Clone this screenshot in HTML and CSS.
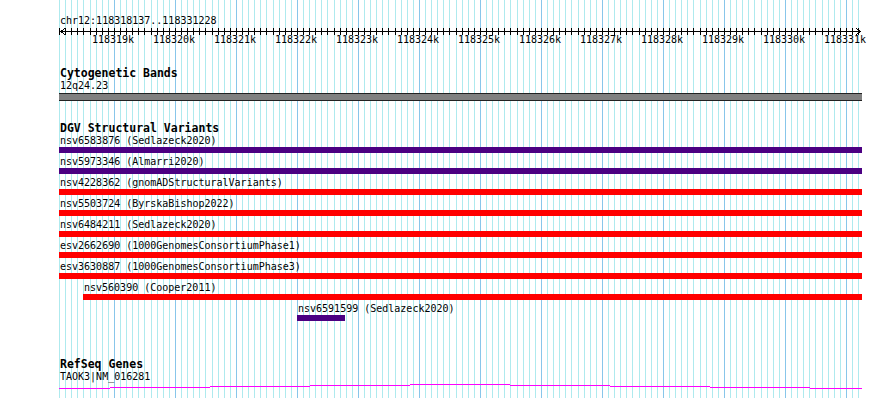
FILE: index.html
```html
<!DOCTYPE html>
<html lang="en">
<head>
<meta charset="UTF-8">
<title>chr12:118318137..118331228</title>
<link rel="stylesheet" href="styles.css">
</head>
<body>
<div class="browser">
  <div id="grid" class="grid"></div>
  <div class="tracks">
    <div class="locus">chr12:118318137..118331228</div>
    <div id="ruler" class="ruler"></div>

    <div class="track cyto">
      <div class="track-title">Cytogenetic Bands</div>
      <div class="label">12q24.23</div>
      <div class="band"></div>
    </div>

    <div class="track dgv">
      <div class="track-title">DGV Structural Variants</div>
      <div class="feature">
        <div class="label">nsv6583876 (Sedlazeck2020)</div>
        <div class="bar gain"></div>
      </div>
      <div class="feature">
        <div class="label">nsv5973346 (Almarri2020)</div>
        <div class="bar gain"></div>
      </div>
      <div class="feature">
        <div class="label">nsv4228362 (gnomADStructuralVariants)</div>
        <div class="bar loss"></div>
      </div>
      <div class="feature">
        <div class="label">nsv5503724 (ByrskaBishop2022)</div>
        <div class="bar loss"></div>
      </div>
      <div class="feature">
        <div class="label">nsv6484211 (Sedlazeck2020)</div>
        <div class="bar loss"></div>
      </div>
      <div class="feature">
        <div class="label">esv2662690 (1000GenomesConsortiumPhase1)</div>
        <div class="bar loss"></div>
      </div>
      <div class="feature">
        <div class="label">esv3630887 (1000GenomesConsortiumPhase3)</div>
        <div class="bar loss"></div>
      </div>
      <div class="feature" style="margin-left: 24px;">
        <div class="label">nsv560390 (Cooper2011)</div>
        <div class="bar loss"></div>
      </div>
      <div class="feature" style="margin-left: 238px;">
        <div class="label">nsv6591599 (Sedlazeck2020)</div>
        <div class="bar gain" style="width: 48px;"></div>
      </div>
    </div>

    <div class="track refseq">
      <div class="track-title">RefSeq Genes</div>
      <div class="label">TAOK3|NM_016281</div>
      <svg class="gene" width="803" height="7" viewBox="0 0 803 7">
        <path d="M0 5.5H51 M51 4.5H151 M151 3.5H251 M251 2.5H351 M351 1.5H451 M451 2.5H551 M551 3.5H651 M651 4.5H751 M751 5.5H803" />
      </svg>
    </div>
  </div>
</div>

<script>
  const start = 118318100;   // first 100bp gridline
  const pxPerStep = 6.1;     // 100bp
  const left = 59;
  const width = 803;
  const grid = document.getElementById('grid');
  const ruler = document.getElementById('ruler');

  let ticks = '';
  let labels = '';
  for (let k = 0; ; k++) {
    const x = Math.round(k * pxPerStep);
    if (x >= width) break;
    const major = k % 10 === 9;

    const line = document.createElement('div');
    line.className = major ? 'gridline major' : 'gridline';
    line.style.left = (left + x) + 'px';
    grid.appendChild(line);

    ticks += `M${x + 0.5} 1V8 `;
    if (major) {
      const kb = (start + k * 100) / 1000;
      labels += `<span class="tick-label" style="left: ${x - 22}px;">${kb}k</span>`;
    }
  }

  ruler.innerHTML =
    `<svg class="scale" width="${width}" height="9" viewBox="0 0 ${width} 9">` +
    `<path d="M1 4.5H${width - 1} ${ticks}" />` +
    `<path d="M6 1.5L1.5 4.5L6 7.5 M${width - 6} 1.5L${width - 1.5} 4.5L${width - 6} 7.5" />` +
    `</svg>` + labels;
</script>
</body>
</html>
```

FILE: styles.css
```css
body {
  margin: 0;
  background: #ffffff;
  color: #000000;
  font-family: "DejaVu Sans Mono", "Liberation Mono", monospace;
}
.browser {
  position: relative;
  width: 890px;
  height: 398px;
  overflow: hidden;
}
.grid {
  position: absolute;
  left: 0;
  top: 0;
  width: 100%;
  height: 100%;
}
.gridline {
  position: absolute;
  top: 0;
  bottom: 0;
  width: 1px;
  background: #aeeaee;
}
.gridline.major {
  background: #88c6ea;
}
.tracks {
  position: relative;
  margin-left: 59px;
  width: 803px;
}
.locus {
  padding: 15px 0 0 1px;
  font-size: 10px;
  line-height: 12px;
}
.ruler {
  position: relative;
  height: 39px;
}
.scale {
  display: block;
}
.scale path {
  fill: none;
  stroke: #000000;
  stroke-width: 1;
  shape-rendering: crispEdges;
}
.tick-label {
  position: absolute;
  top: 7px;
  font-size: 10px;
  line-height: 12px;
  white-space: nowrap;
}
.track-title {
  padding-left: 1px;
  font-size: 11.5px;
  font-weight: bold;
  line-height: 14px;
  white-space: nowrap;
}
.label {
  padding-left: 1px;
  font-size: 10px;
  line-height: 12px;
  white-space: nowrap;
}
.band {
  margin-top: 1px;
  height: 6px;
  background: #808080;
  border-top: 1px solid #222222;
  border-bottom: 1px solid #222222;
}
.dgv {
  margin-top: 20px;
}
.feature {
  margin-bottom: 3px;
}
.bar {
  height: 6px;
}
.bar.gain {
  background: #4b0082;
}
.bar.loss {
  background: #ff0000;
}
.refseq {
  margin-top: 36px;
}
.gene {
  display: block;
}
.gene path {
  fill: none;
  stroke: #ff00ff;
  stroke-width: 1;
  shape-rendering: crispEdges;
}
```
